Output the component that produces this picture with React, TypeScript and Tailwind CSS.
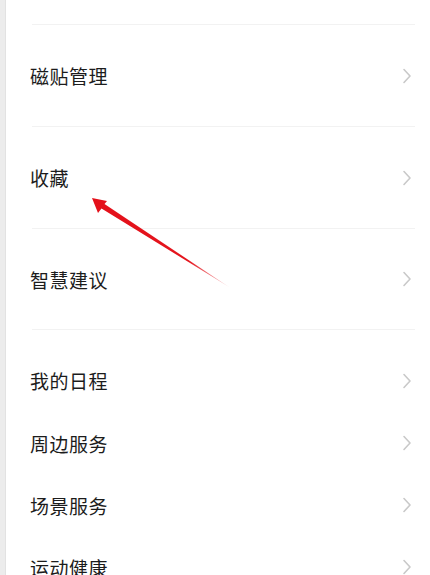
import React from "react";

const Chevron = () => (
  <svg width="10" height="16" viewBox="0 0 10 16" className="shrink-0">
    <polyline points="2,1.5 8,8 2,14.5" fill="none" stroke="#c9c9c9" strokeWidth="1.6" strokeLinecap="round" strokeLinejoin="round" />
  </svg>
);

const Row = ({ label, h }: { label: string; h: string }) => (
  <div className={`flex shrink-0 items-center justify-between pl-6 pr-[18px] ${h}`}>
    <span className="text-[19px] leading-none text-[#1c1c1c] tracking-[0.5px]">{label}</span>
    <Chevron />
  </div>
);

const Divider = () => <div className="ml-[26px] mr-[15px] h-px shrink-0 bg-[#f2f2f2]" />;

export default function App() {
  return (
    <div
      className="relative flex w-[430px] h-[575px] overflow-hidden bg-white"
      style={{ fontFamily: '"Noto Sans CJK SC", "Noto Sans", sans-serif' }}
    >
      <div className="w-[6px] shrink-0 bg-[#ececec] border-r border-[#e2e2e2]" />
      <div className="flex flex-1 flex-col">
        <div className="h-[24px] shrink-0" />
        <Divider />
        <Row label="磁贴管理" h="h-[101px]" />
        <Divider />
        <Row label="收藏" h="h-[101px]" />
        <Divider />
        <Row label="智慧建议" h="h-[100px]" />
        <Divider />
        <div className="h-[19px] shrink-0" />
        <Row label="我的日程" h="h-[63px]" />
        <Row label="周边服务" h="h-[62px]" />
        <Row label="场景服务" h="h-[62px]" />
        <Row label="运动健康" h="h-[62px]" />
      </div>
      <svg className="absolute left-0 top-0 pointer-events-none" width="430" height="575">
        <defs>
          <linearGradient id="ar" x1="92" y1="198" x2="230" y2="287" gradientUnits="userSpaceOnUse">
            <stop offset="0" stopColor="#e4101a" />
            <stop offset="0.7" stopColor="#e4151d" />
            <stop offset="1" stopColor="#e4151d" stopOpacity="0.2" />
          </linearGradient>
        </defs>
        <polygon
          points="92,198 107,201 104.5,204 229,287 101.5,208.5 98,213"
          fill="url(#ar)"
        />
      </svg>
    </div>
  );
}
